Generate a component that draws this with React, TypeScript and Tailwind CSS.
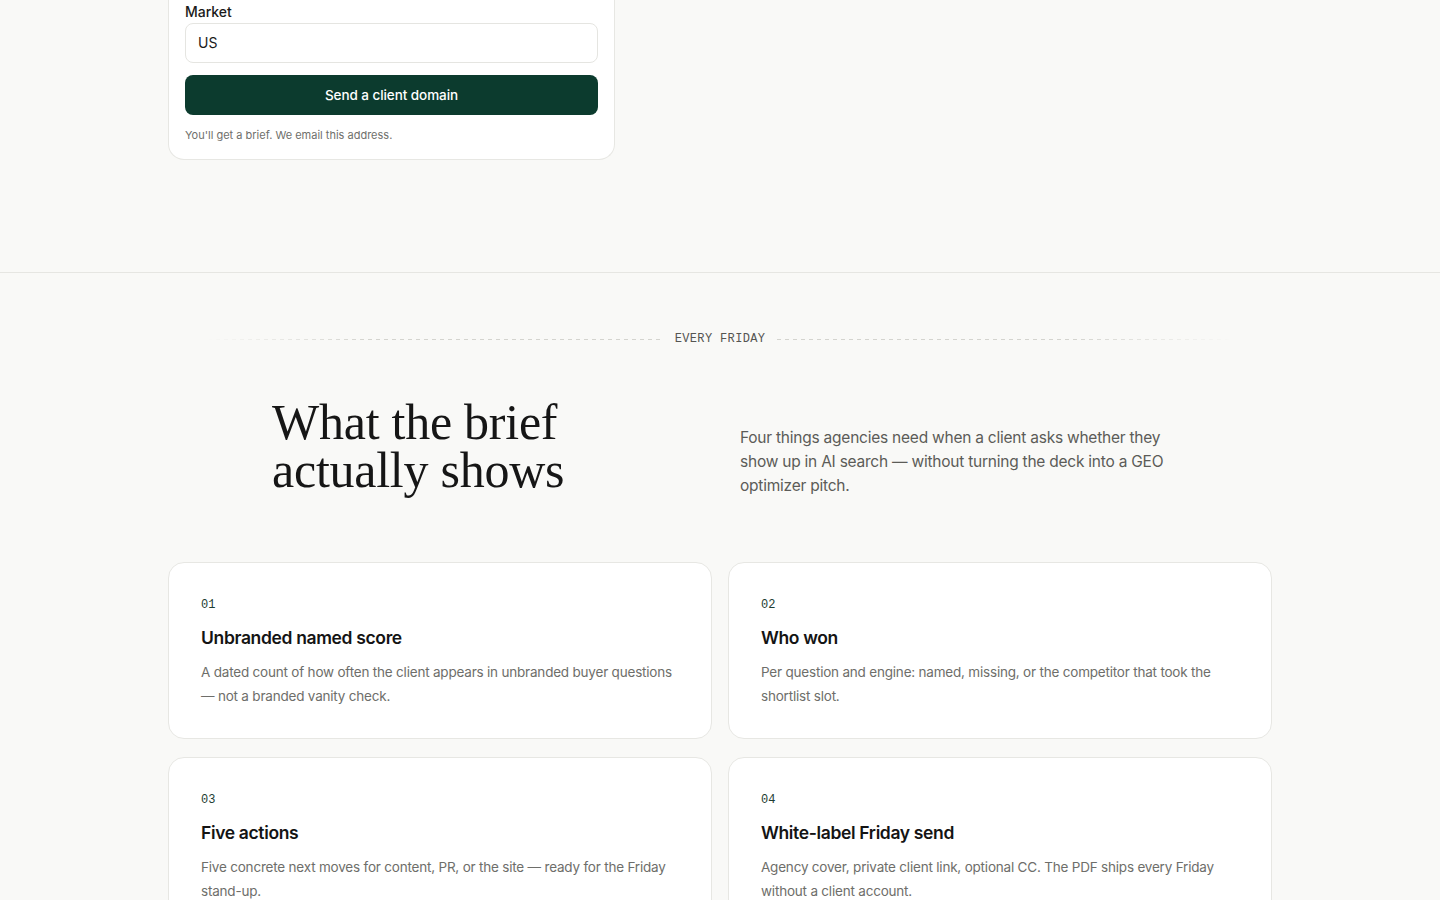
const features = [
  {
    n: '01',
    title: 'Unbranded named score',
    body: 'A dated count of how often the client appears in unbranded buyer questions — not a branded vanity check.',
  },
  {
    n: '02',
    title: 'Who won',
    body: 'Per question and engine: named, missing, or the competitor that took the shortlist slot.',
  },
  {
    n: '03',
    title: 'Five actions',
    body: 'Five concrete next moves for content, PR, or the site — ready for the Friday stand-up.',
  },
  {
    n: '04',
    title: 'White-label Friday send',
    body: 'Agency cover, private client link, optional CC. The PDF ships every Friday without a client account.',
  },
];

const sans = "font-['Inter','Noto_Sans',sans-serif]";
const mono = "font-['Liberation_Mono','DejaVu_Sans_Mono',monospace]";

function DomainForm() {
  return (
    <div className="w-[447px] rounded-b-2xl border border-t-0 border-[#e7e7e3] bg-white px-4 pt-[2px] pb-4">
      <label className="block text-sm leading-5 font-medium text-[#1a1a1a]">Market</label>
      <div className="mt-[1px] flex h-10 items-center rounded-lg border border-[#e5e5e1] bg-white px-3 text-sm text-[#1a1a1a]">
        US
      </div>
      <button className="mt-3 h-10 w-full rounded-lg bg-[#0c3b2e] text-[13.5px] font-medium tracking-[-0.005em] text-white">
        Send a client domain
      </button>
      <p className="mt-3 text-[11px] leading-4 text-[#6f6f6b]">You'll get a brief. We email this address.</p>
    </div>
  );
}

function Eyebrow({ children }: { children: string }) {
  return (
    <div className="flex items-center gap-3">
      <div className="h-px flex-1 bg-[repeating-linear-gradient(90deg,#d4d4cf_0_4px,transparent_4px_8px)] [mask-image:linear-gradient(to_right,transparent_8%,black_40%)]" />
      <span className={`${mono} text-xs leading-4 tracking-[0.03em] text-[#555552]`}>{children}</span>
      <div className="h-px flex-1 bg-[repeating-linear-gradient(90deg,#d4d4cf_0_4px,transparent_4px_8px)] [mask-image:linear-gradient(to_left,transparent_8%,black_40%)]" />
    </div>
  );
}

function FeatureCard({ n, title, body }: { n: string; title: string; body: string }) {
  return (
    <div className="rounded-2xl border border-[#e7e7e3] bg-white px-8 pt-[34px] pb-[30px]">
      <div className={`${mono} text-xs leading-4 text-[#1e3d32]`}>{n}</div>
      <h3 className="mt-[11px] text-[17.5px] leading-7 font-semibold tracking-[-0.02em] text-[#141414]">{title}</h3>
      <p className="mt-2 text-[13.5px] leading-6 tracking-[-0.015em] text-[#6e6e6a]">{body}</p>
    </div>
  );
}

export default function App() {
  return (
    <div className={`${sans} min-h-screen bg-[#f9f9f7]`}>
      <section className="border-b border-[#e6e6e2] pb-[112px]">
        <div className="mx-auto max-w-[1104px]">
          <DomainForm />
        </div>
      </section>

      <section className="pt-[58px] pb-24">
        <div className="mx-auto max-w-[1104px]">
          <Eyebrow>EVERY FRIDAY</Eyebrow>

          <div className="mx-auto mt-[51px] grid max-w-[896px] grid-cols-2 items-start gap-10">
            <h2 className="font-['Liberation_Serif','DejaVu_Serif',serif] text-[50px] leading-[48px] tracking-[-0.005em] text-[#161616]">
              What the brief actually shows
            </h2>
            <p className="pt-[28px] text-[15.5px] leading-6 tracking-[-0.015em] text-[#5c5c58]">
              Four things agencies need when a client asks whether they show up in AI search — without turning the
              deck into a GEO optimizer pitch.
            </p>
          </div>

          <div className="mt-16 grid grid-cols-2 gap-x-4 gap-y-[18px]">
            {features.map((f) => (
              <FeatureCard key={f.n} {...f} />
            ))}
          </div>
        </div>
      </section>
    </div>
  );
}
